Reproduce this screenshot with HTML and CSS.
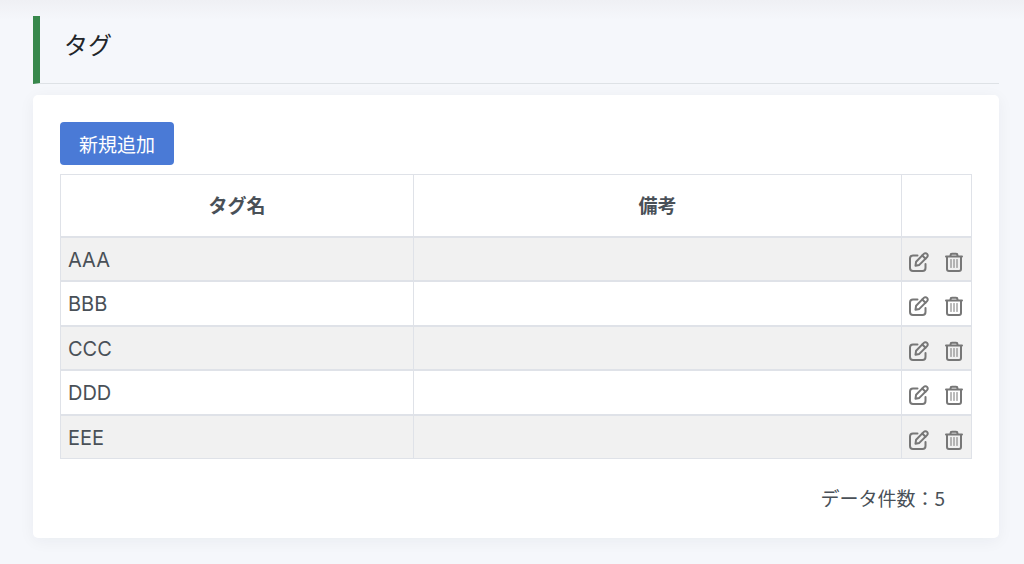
FILE: index.html
```html
<!DOCTYPE html>
<html lang="ja">
<head>
    <meta charset="UTF-8">
    <meta name="viewport" content="width=device-width, initial-scale=1.0">
    <title>タグ</title>
    <link rel="stylesheet" href="styles.css">
</head>
<body>
    <svg class="icon-defs" aria-hidden="true">
        <symbol id="icon-edit" viewBox="0 0 20 20">
            <path d="M8.500 3.500H4A3 3 0 0 0 1 6.500V16A3 3 0 0 0 4 19H13.500A3 3 0 0 0 16.500 16V12"/>
            <path d="M14.800 1.900A2.100 2.100 0 0 1 18.100 5.100L10.300 12.900L6.500 13.700L7.100 9.700Z"/>
            <path d="M13.300 3.500L16.500 6.700"/>
        </symbol>
        <symbol id="icon-trash" viewBox="0 0 20 20">
            <path d="M2 4.500H18M6.500 4.500V3.200Q6.500 1.800 8 1.800H12Q13.500 1.800 13.500 3.200V4.500M3 4.500V17Q3 19 5 19H15Q17 19 17 17V4.500"/>
            <path class="thin" d="M7 7.500V15.500M10 7.500V15.500M13 7.500V15.500"/>
        </symbol>
    </svg>

    <main class="page">
        <header class="page-header">
            <h1>タグ</h1>
        </header>

        <section class="card">
            <button type="button" class="add-btn">新規追加</button>
            <table class="tag-table">
                <colgroup>
                    <col class="col-name">
                    <col>
                    <col class="col-actions">
                </colgroup>
                <thead>
                    <tr>
                        <th scope="col">タグ名</th>
                        <th scope="col">備考</th>
                        <td></td>
                    </tr>
                </thead>
                <tbody>
                    <tr>
                        <td>AAA</td>
                        <td></td>
                        <td>
                            <div class="actions">
                                <button type="button" aria-label="編集"><svg><use href="#icon-edit"/></svg></button>
                                <button type="button" aria-label="削除"><svg><use href="#icon-trash"/></svg></button>
                            </div>
                        </td>
                    </tr>
                    <tr>
                        <td>BBB</td>
                        <td></td>
                        <td>
                            <div class="actions">
                                <button type="button" aria-label="編集"><svg><use href="#icon-edit"/></svg></button>
                                <button type="button" aria-label="削除"><svg><use href="#icon-trash"/></svg></button>
                            </div>
                        </td>
                    </tr>
                    <tr>
                        <td>CCC</td>
                        <td></td>
                        <td>
                            <div class="actions">
                                <button type="button" aria-label="編集"><svg><use href="#icon-edit"/></svg></button>
                                <button type="button" aria-label="削除"><svg><use href="#icon-trash"/></svg></button>
                            </div>
                        </td>
                    </tr>
                    <tr>
                        <td>DDD</td>
                        <td></td>
                        <td>
                            <div class="actions">
                                <button type="button" aria-label="編集"><svg><use href="#icon-edit"/></svg></button>
                                <button type="button" aria-label="削除"><svg><use href="#icon-trash"/></svg></button>
                            </div>
                        </td>
                    </tr>
                    <tr>
                        <td>EEE</td>
                        <td></td>
                        <td>
                            <div class="actions">
                                <button type="button" aria-label="編集"><svg><use href="#icon-edit"/></svg></button>
                                <button type="button" aria-label="削除"><svg><use href="#icon-trash"/></svg></button>
                            </div>
                        </td>
                    </tr>
                </tbody>
            </table>
            <p class="count">データ件数：5</p>
        </section>
    </main>
</body>
</html>
```

FILE: styles.css
```css
* {
    box-sizing: border-box;
}

body {
    margin: 0;
    background: linear-gradient(#eff0f4, #f5f7fb 20px) no-repeat #f5f7fb;
    color: #495057;
    font-family: "Noto Sans CJK JP", sans-serif;
    font-size: 19px;
    line-height: 28px;
}

.icon-defs {
    display: none;
}

.page {
    padding: 16px 25px 24px 33px;
}

.page-header {
    padding: 14px 24px 25px;
    border-left: 7px solid #38884c;
    border-bottom: 1px solid #dee2e6;
    margin-bottom: 11px;
}

h1 {
    margin: 0;
    color: #212529;
    font-size: 24px;
    font-weight: 400;
    line-height: 28px;
}

.card {
    padding: 27px 27px 26px;
    background-color: #fff;
    border-radius: 5px;
    box-shadow: 0 3px 16px rgba(18, 38, 63, 0.05);
}

button {
    font-family: inherit;
    cursor: pointer;
}

.add-btn {
    display: block;
    height: 43px;
    padding: 0 19px;
    margin-bottom: 9px;
    background-color: #4a7ad6;
    color: #fff;
    border: none;
    border-radius: 4px;
    font-size: 19px;
}

.tag-table {
    width: 100%;
    border-collapse: collapse;
    table-layout: fixed;
    border: 1px solid #dfe2e8;
}

.col-name {
    width: 353px;
}

.col-actions {
    width: 70px;
}

.tag-table th,
.tag-table td {
    padding: 0 7px;
    border: 1px solid #dfe2e8;
}

.tag-table th {
    height: 62px;
    font-weight: 700;
}

.tag-table tbody td {
    height: 44px;
    padding: 2px 7px 0;
    border-top: 2px solid #dfe2e8;
    font-family: Inter, "Liberation Sans", sans-serif;
    font-size: 20px;
}

.tag-table tbody tr:nth-child(even) td {
    height: 45px;
}

.tag-table tbody tr:nth-child(odd) {
    background-color: #f1f1f1;
}

.actions {
    display: flex;
    justify-content: space-between;
    padding-top: 4px;
}

.actions button {
    display: flex;
    padding: 0;
    background: none;
    border: none;
    color: #777;
}

.actions svg {
    width: 20px;
    height: 20px;
    fill: none;
    stroke: currentColor;
    stroke-width: 2;
    stroke-linejoin: round;
    stroke-linecap: round;
}

.thin {
    stroke-width: 1;
}

.count {
    margin: 25px 27px 0;
    text-align: right;
}
```
